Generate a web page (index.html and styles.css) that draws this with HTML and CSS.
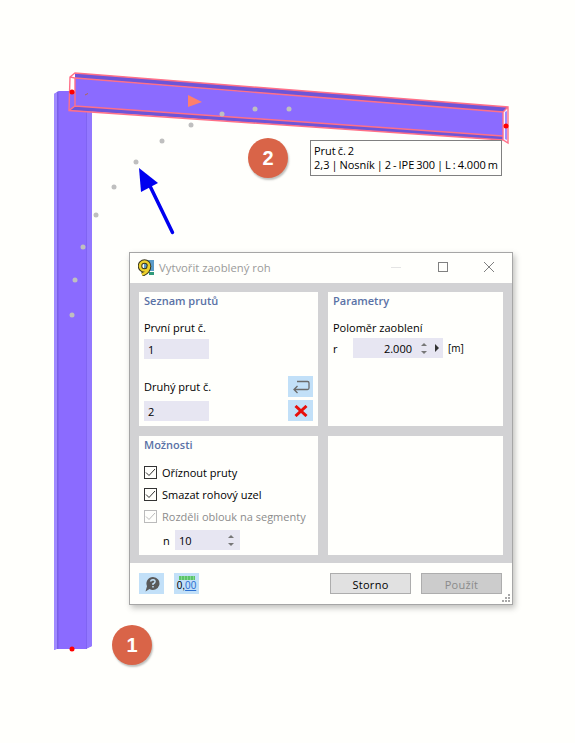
FILE: index.html
```html
<!DOCTYPE html>
<html lang="cs">
<head>
    <meta charset="UTF-8">
    <meta name="viewport" content="width=device-width, initial-scale=1.0">
    <title>Vytvořit zaoblený roh</title>
    <link rel="stylesheet" href="styles.css">
</head>
<body>

<div class="canvas">
    <!-- model: sloup, nosnik, body oblouku, sipka -->
    <svg class="model" width="575" height="743" viewBox="0 0 575 743">
        <polygon points="54,94 59,91 92,91 92,646 86,649 56,649 54,650" fill="#8b6bff"/>
        <polygon points="54,94 57,92 57,649 54,650" fill="#a08aff"/>
        <polygon points="57,92 58.500,91 58.500,649 57,649" fill="#7a60e8"/>
        <polygon points="86,110 87,110 87,649 86,649" fill="#8064f2"/>
        <polygon points="87,110 92,110 92,646 87,648" fill="#9378ff"/>
        <polygon points="70,92 75,92 75,78 503,112 503,137 69,110" fill="#8b6bff"/>
        <polygon points="75,73 508,107 503,112 75,78" fill="#6d55d8"/>
        <polygon points="75,106 503,136 503,140 69,110" fill="#6d55d8"/>
        <polygon points="70,78 75,78 75,92 70,92" fill="#fffffc"/>
        <polygon points="503,112 508,107 508,143 503,140" fill="#f4f2ff"/>
        <polygon points="505,112 507,111 507,140 505,139" fill="#a08aff"/>
        <path d="M70 77L75 73L508 107L508 143L503 140L69 110.500Z M75 78L503 112L503 140 M70 77L75 78L75 106 M69 110.500L75 106L503 136 M503 112L508 107" fill="none" stroke="#ff7088" stroke-width="1.400"/>
        <polygon points="188,95 202,102 188,107" fill="#ff7f6e"/>
        <path d="M85 95L88 93.500" stroke="#b06a50"/>
        <circle cx="72" cy="92" r="2.500" fill="#f00"/>
        <circle cx="506" cy="126" r="2.500" fill="#f00"/>
        <circle cx="72" cy="649" r="2.500" fill="#f00"/>
        <g fill="#bfbfbf">
            <circle cx="136" cy="162" r="2.500"/>
            <circle cx="114" cy="187" r="2.500"/>
            <circle cx="96" cy="215" r="2.500"/>
            <circle cx="83" cy="247" r="2.500"/>
            <circle cx="75" cy="280" r="2.500"/>
            <circle cx="72" cy="315" r="2.500"/>
            <circle cx="162" cy="141" r="2.500"/>
            <circle cx="191" cy="125" r="2.500"/>
            <circle cx="222" cy="114" r="2.500"/>
            <circle cx="255" cy="109" r="2.500"/>
            <circle cx="289" cy="109" r="2.500"/>
        </g>
        <path d="M172.500 232.500L149 184" stroke="#0000f0" stroke-width="3.500" stroke-linecap="round"/>
        <polygon points="139,168 158,183 141,192" fill="#0000f0"/>
    </svg>

    <div class="badge badge-one">1</div>
    <div class="badge badge-two">2</div>

    <div class="tooltip">
        <div>Prut č. 2</div>
        <div>2,3 | Nosník | 2 - IPE 300 | L : 4.000 m</div>
    </div>

    <div class="dialog">
        <div class="titlebar">
            <svg class="app-icon" width="17" height="17" viewBox="0 0 17 17">
                <rect x="6" y="1" width="10" height="11" fill="#5b9bc9"/>
                <rect x="11" y="13" width="5" height="3" fill="#2f9a7a"/>
                <circle cx="6.500" cy="7" r="4.500" fill="none" stroke="#3d3a20" stroke-width="4.500"/>
                <path d="M11 7Q11 13 4 15.500" fill="none" stroke="#3d3a20" stroke-width="4.500"/>
                <circle cx="6.500" cy="7" r="4.500" fill="none" stroke="#ecd02c" stroke-width="2.500"/>
                <path d="M11 7Q11 13 4 15.500" fill="none" stroke="#ecd02c" stroke-width="2.500"/>
            </svg>
            <span class="title">Vytvořit zaoblený roh</span>
            <div class="win-buttons">
                <svg width="12" height="12" viewBox="0 0 12 12"><path d="M0 6.500H10" stroke="#e4e4e4"/></svg>
                <svg width="12" height="12" viewBox="0 0 12 12"><rect x="1.500" y="1.500" width="9" height="9" fill="none" stroke="#808080"/></svg>
                <svg width="12" height="12" viewBox="0 0 12 12"><path d="M1 1L11 11M11 1L1 11" stroke="#808080"/></svg>
            </div>
        </div>

        <div class="body">
            <section class="panel">
                <h2>Seznam prutů</h2>
                <div class="label first-label">První prut č.</div>
                <div class="field">1</div>
                <div class="label-row">
                    <div class="label">Druhý prut č.</div>
                    <div class="icon-btn">
                        <svg width="18" height="14" viewBox="0 0 18 14"><path d="M5 1.500H15.500Q17 1.500 17 3V8Q17 9.500 15.500 9.500H2M5.500 6L2 9.500L5.500 13" fill="none" stroke="#6b6b6b" stroke-width="1.300"/></svg>
                    </div>
                </div>
                <div class="field-row">
                    <div class="field">2</div>
                    <div class="icon-btn">
                        <svg width="14" height="12" viewBox="0 0 14 12"><path d="M1.500 1L12.500 11M12.500 1L1.500 11" stroke="#e8100c" stroke-width="3"/></svg>
                    </div>
                </div>
            </section>

            <section class="panel">
                <h2>Parametry</h2>
                <div class="label first-label">Poloměr zaoblení</div>
                <div class="radius-row">
                    <span class="radius-name">r</span>
                    <div class="field field-spin">
                        <span class="spin-value">2.000</span>
                        <span class="spin"><i class="up"></i><i class="down"></i></span>
                        <i class="play"></i>
                    </div>
                    <span class="unit">[m]</span>
                </div>
            </section>

            <section class="panel">
                <h2>Možnosti</h2>
                <div class="check-list">
                    <div class="check"><span class="box"><svg width="11" height="9" viewBox="0 0 11 9"><path d="M1 4.500L4 7.500L10 1" fill="none" stroke="#333"/></svg></span>Oříznout pruty</div>
                    <div class="check"><span class="box"><svg width="11" height="9" viewBox="0 0 11 9"><path d="M1 4.500L4 7.500L10 1" fill="none" stroke="#333"/></svg></span>Smazat rohový uzel</div>
                    <div class="check check-off"><span class="box"><svg width="11" height="9" viewBox="0 0 11 9"><path d="M1 4.500L4 7.500L10 1" fill="none" stroke="#bbb"/></svg></span>Rozděli oblouk na segmenty</div>
                </div>
                <div class="count-row">
                    <span class="count-name">n</span>
                    <div class="field field-count">
                        <span>10</span>
                        <span class="spin"><i class="up"></i><i class="down"></i></span>
                    </div>
                </div>
            </section>

            <section class="panel"></section>
        </div>

        <div class="footer">
            <div class="icon-btn">
                <svg width="18" height="18" viewBox="0 0 18 18"><path d="M10 2A6.500 6.500 0 1 1 6.500 14L2.500 16.500L4 11.200A6.500 6.500 0 0 1 10 2Z" fill="#5a5a5a"/><path d="M7.500 6.500Q8 4.700 10 4.700Q12.300 4.900 12 6.800Q11.800 8 10 8.800V10M10 11V12.500" fill="none" stroke="#c4e1f7" stroke-width="1.500"/></svg>
            </div>
            <div class="icon-btn decimals">
                <span class="ruler"></span>
                <span class="decimals-text">0,<u>00</u></span>
            </div>
            <div class="btn storno">Storno</div>
            <div class="btn btn-off">Použít</div>
            <svg class="grip" width="9" height="9" viewBox="0 0 9 9">
                <path d="M6 0h2v2h-2zM3 3h2v2h-2zM6 3h2v2h-2zM0 6h2v2h-2zM3 6h2v2h-2zM6 6h2v2h-2z" fill="#a8a8a8"/>
            </svg>
        </div>
    </div>
</div>

</body>
</html>
```

FILE: styles.css
```css
* {
    box-sizing: border-box;
}

html, body {
    margin: 0;
    padding: 0;
}

body {
    background: #fffffc;
    font-family: "Open Sans", "Noto Sans", sans-serif;
    font-size: 11px;
    color: #000;
}

.canvas {
    position: relative;
    width: 575px;
    height: 743px;
    overflow: hidden;
}

.model {
    position: absolute;
    left: 0;
    top: 0;
}

.badge {
    position: absolute;
    width: 40px;
    height: 40px;
    border-radius: 50%;
    background: #d96448;
    box-shadow: 1px 2px 2px rgba(0,0,0,0.25);
    color: #fff;
    font-family: "Liberation Sans", sans-serif;
    font-weight: bold;
    font-size: 20px;
    line-height: 40px;
    text-align: center;
}

.badge-one {
    left: 112px;
    top: 625px;
}

.badge-two {
    left: 248px;
    top: 138px;
}

.tooltip {
    position: absolute;
    left: 310px;
    top: 140px;
    width: 192px;
    height: 36px;
    padding: 3px 3px;
    background: #fffffc;
    border: 1px solid #808080;
    font-size: 11px;
    line-height: 13.500px;
    word-spacing: -0.900px;
    white-space: nowrap;
}

.dialog {
    position: absolute;
    left: 129px;
    top: 252px;
    width: 384px;
    height: 353px;
    display: flex;
    flex-direction: column;
    background: #fffffc;
    border: 1px solid #a6a6a6;
    box-shadow: 2px 3px 6px rgba(0,0,0,0.25);
}

.titlebar {
    height: 30px;
    display: flex;
    align-items: center;
    padding: 0 17px 2px 8px;
}

.app-icon {
    margin-right: 4px;
}

.title {
    color: #9a9a9a;
    font-size: 11.300px;
}

.win-buttons {
    margin-left: auto;
    display: flex;
    gap: 34px;
}

.body {
    height: 280px;
    display: grid;
    grid-template-columns: 179px 175px;
    grid-template-rows: 134px 119px;
    gap: 10px;
    padding: 9px 9px;
    background: #d2d2d4;
}

.panel {
    background: #fffffc;
    padding: 1px 5px 0;
}

.panel h2 {
    margin: 0;
    height: 15px;
    color: #5a72a6;
    font-size: 11px;
    line-height: 15px;
    font-weight: 600;
}

.label {
    height: 16px;
    line-height: 16px;
}

.first-label {
    margin-top: 12px;
}

.field {
    width: 65px;
    height: 20px;
    padding-left: 4px;
    background: #e7e6f2;
    line-height: 21px;
}

.first-label + .field {
    margin-top: 3px;
}

.label-row {
    margin-top: 17px;
    display: flex;
    justify-content: space-between;
    align-items: center;
}

.field-row {
    margin-top: 3px;
    display: flex;
    justify-content: space-between;
    align-items: flex-end;
}

.icon-btn {
    width: 25px;
    height: 21px;
    display: flex;
    align-items: center;
    justify-content: center;
    background: #c2e0f8;
}

.radius-row {
    margin-top: 2px;
    display: flex;
    align-items: center;
}

.radius-name {
    width: 20px;
}

.field-spin {
    width: 90px;
    display: flex;
    align-items: center;
    padding: 0 4px 0 0;
    justify-content: flex-end;
}

.unit {
    margin-left: 5px;
    font-size: 10px;
}

.spin {
    display: flex;
    flex-direction: column;
    gap: 5px;
    margin-left: 9px;
}

.spin i {
    display: block;
    width: 0;
    height: 0;
    border-left: 3px solid transparent;
    border-right: 3px solid transparent;
}

.spin .up {
    border-bottom: 3px solid #777;
}

.spin .down {
    border-top: 3px solid #777;
}

.play {
    margin-left: 8px;
    width: 0;
    height: 0;
    border-top: 4px solid transparent;
    border-bottom: 4px solid transparent;
    border-left: 4px solid #333;
}

.check-list {
    margin-top: 12px;
    display: flex;
    flex-direction: column;
    gap: 6px;
}

.check {
    height: 16px;
    display: flex;
    align-items: center;
    gap: 5px;
}

.box {
    width: 13px;
    height: 13px;
    display: flex;
    align-items: center;
    justify-content: center;
    border: 1px solid #333;
    background: #fffffc;
}

.check-off {
    color: #8c8c8c;
}

.check-off .box {
    border-color: #bbb;
}

.count-row {
    margin-top: 6px;
    display: flex;
    align-items: center;
}

.count-name {
    margin-left: 19px;
    width: 12px;
}

.field-count {
    display: flex;
    justify-content: space-between;
    align-items: center;
    padding-right: 6px;
}

.footer {
    position: relative;
    flex: 1;
    display: flex;
    align-items: center;
    gap: 10px;
    padding: 0 10px 0 9px;
}

.decimals {
    flex-direction: column;
}

.ruler {
    width: 16px;
    height: 4px;
    background: repeating-linear-gradient(90deg, #5cc46a 0, #5cc46a 2px, #86d890 2px, #86d890 3px);
}

.decimals-text {
    font-family: "Liberation Sans", sans-serif;
    font-size: 10px;
    line-height: 11px;
}

.decimals-text u {
    color: #2a6fd0;
}

.btn {
    width: 81px;
    height: 21px;
    background: #e1e1e1;
    border: 1px solid #adadad;
    text-align: center;
    line-height: 21px;
    letter-spacing: 0.300px;
}

.storno {
    margin-left: auto;
}

.btn-off {
    background: #cccccc;
    color: #8a8a8a;
}

.grip {
    position: absolute;
    right: 1px;
    bottom: 1px;
}
```
